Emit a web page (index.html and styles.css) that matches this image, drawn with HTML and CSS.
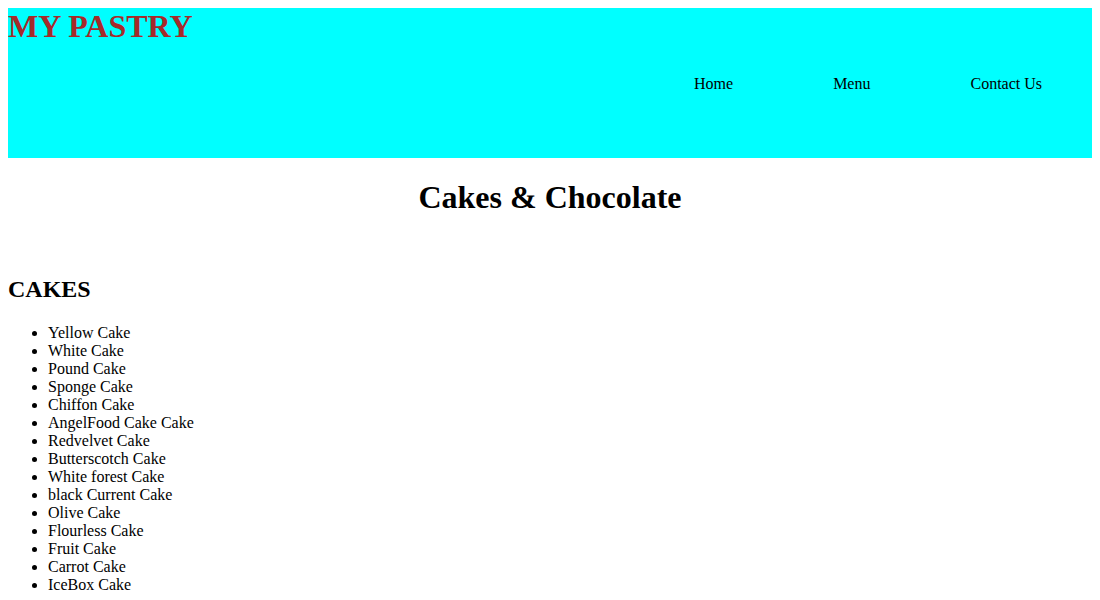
FILE: index.html
```html
<!DOCTYPE html>
<html>
<head>
<meta charset="utf-8">
<title>My Pastry</title>
<link rel="stylesheet" href="styles.css">
</head>
<body>
<header class="site-header">
  <h1 class="brand">MY PASTRY</h1>
  <nav class="nav">
    <ul class="nav-list">
      <li class="nav-item">Home</li>
      <li class="nav-item">Menu</li>
      <li class="nav-item">Contact Us</li>
    </ul>
  </nav>
</header>
<h1 class="page-title">Cakes &amp; Chocolate</h1>
<div class="spacer"></div>
<h2 class="section-title">CAKES</h2>
<ul class="cake-list">
  <li>Yellow Cake</li>
  <li>White Cake</li>
  <li>Pound Cake</li>
  <li>Sponge Cake</li>
  <li>Chiffon Cake</li>
  <li>AngelFood Cake Cake</li>
  <li>Redvelvet Cake</li>
  <li>Butterscotch Cake</li>
  <li>White forest Cake</li>
  <li>black Current Cake</li>
  <li>Olive Cake</li>
  <li>Flourless Cake</li>
  <li>Fruit Cake</li>
  <li>Carrot Cake</li>
  <li>IceBox Cake</li>
</ul>
</body>
</html>
```
FILE: styles.css
```css
html, body {
  font-family: "Liberation Serif", "Times New Roman", serif;
  color: #000;
}
body {
  margin: 8px;
  background: #fff;
}
.site-header {
  background: #00ffff;
  height: 150px;
}
.brand {
  margin: 0;
  font-size: 32px;
  font-weight: bold;
  color: #a52a2a;
}
.nav-list {
  list-style: none;
  margin: 30px 0 0;
  padding: 0;
  display: flex;
  justify-content: flex-end;
}
.nav-item {
  padding: 0 50px;
  font-size: 16px;
}
.page-title {
  text-align: center;
  font-size: 32px;
  margin: 21.44px 0;
}
.spacer {
  height: 18.4px;
}
.section-title {
  font-size: 24px;
  margin: 19.92px 0 21px;
}
.cake-list {
  margin: 16px 0 0;
  padding-left: 40px;
  list-style: disc;
}
```
